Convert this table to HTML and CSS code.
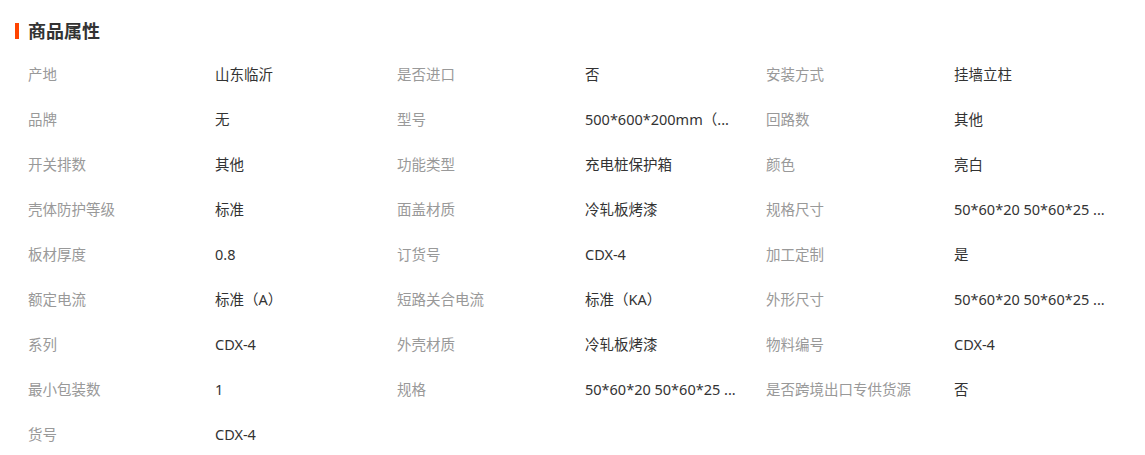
FILE: index.html
```html
<!DOCTYPE html>
<html lang="zh-CN">
<head>
<meta charset="utf-8">
<title>商品属性</title>
<link rel="stylesheet" href="styles.css">
</head>
<body>
<section class="attrs">
  <h2 class="attrs-title">商品属性</h2>
  <div class="attrs-grid">
    <div class="k">产地</div><div class="v">山东临沂</div>
    <div class="k">是否进口</div><div class="v">否</div>
    <div class="k">安装方式</div><div class="v">挂墙立柱</div>

    <div class="k">品牌</div><div class="v">无</div>
    <div class="k">型号</div><div class="v">500*600*200mm（...</div>
    <div class="k">回路数</div><div class="v">其他</div>

    <div class="k">开关排数</div><div class="v">其他</div>
    <div class="k">功能类型</div><div class="v">充电桩保护箱</div>
    <div class="k">颜色</div><div class="v">亮白</div>

    <div class="k">壳体防护等级</div><div class="v">标准</div>
    <div class="k">面盖材质</div><div class="v">冷轧板烤漆</div>
    <div class="k">规格尺寸</div><div class="v">50*60*20 50*60*25 ...</div>

    <div class="k">板材厚度</div><div class="v">0.8</div>
    <div class="k">订货号</div><div class="v">CDX-4</div>
    <div class="k">加工定制</div><div class="v">是</div>

    <div class="k">额定电流</div><div class="v">标准（A）</div>
    <div class="k">短路关合电流</div><div class="v">标准（KA）</div>
    <div class="k">外形尺寸</div><div class="v">50*60*20 50*60*25 ...</div>

    <div class="k">系列</div><div class="v">CDX-4</div>
    <div class="k">外壳材质</div><div class="v">冷轧板烤漆</div>
    <div class="k">物料编号</div><div class="v">CDX-4</div>

    <div class="k">最小包装数</div><div class="v">1</div>
    <div class="k">规格</div><div class="v">50*60*20 50*60*25 ...</div>
    <div class="k">是否跨境出口专供货源</div><div class="v">否</div>

    <div class="k">货号</div><div class="v">CDX-4</div>
  </div>
</section>
</body>
</html>
```

FILE: styles.css
```css
html, body {
  margin: 0;
  padding: 0;
  background: #fff;
}
body {
  font-family: "Noto Sans", "Noto Sans CJK SC", sans-serif;
  font-size: 14.5px;
  color: #333;
}
.attrs {
  padding: 22px 0 0 15px;
}
.attrs-title {
  margin: 0;
  display: flex;
  align-items: center;
  gap: 9px;
  font-size: 18px;
  font-weight: bold;
  color: #333;
  line-height: 18px;
  height: 18px;
}
.attrs-title::before {
  content: "";
  width: 4px;
  height: 16px;
  background: #ff4400;
}
.attrs-grid {
  margin-top: 11px;
  padding-left: 13px;
  display: grid;
  grid-template-columns: 187px 182px 188px 181px 188px 180px;
  grid-auto-rows: 45px;
  align-items: center;
}
.k {
  color: #999;
  white-space: nowrap;
}
.v {
  color: #333;
  white-space: nowrap;
}
```
